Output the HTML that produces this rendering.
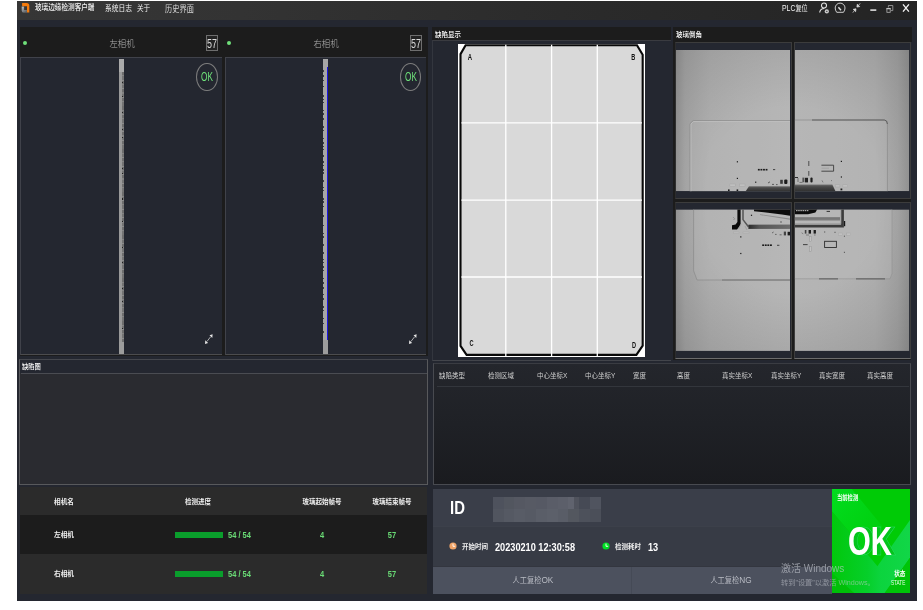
<!DOCTYPE html>
<html lang="zh"><head><meta charset="utf-8"><title>玻璃边缘检测客户端</title>
<style>
html,body{margin:0;padding:0;background:#fff;width:923px;height:610px;overflow:hidden}
body{position:relative;font-family:"Liberation Sans","Noto Sans CJK SC",sans-serif}
div,span,svg{position:absolute;display:block}
#root{left:0;top:0;width:923px;height:610px;will-change:transform}
.t{white-space:nowrap}
</style></head><body><div id="root">
<div style="left:17.2px;top:1.1px;width:899.6px;height:599.6px;background:#242730;"></div>
<div style="left:17.2px;top:1.1px;width:899.6px;height:18.7px;background:linear-gradient(90deg,#363636 0%,#333 25%,#2a2a2a 65%,#242424 100%);"></div>
<svg style="left:21px;top:2px" width="9" height="12" viewBox="21 2 9 12"><defs><linearGradient id="lg" x1="0" y1="0" x2="0.6" y2="1"><stop offset="0" stop-color="#c4c8cc"/><stop offset="1" stop-color="#5e6266"/></linearGradient></defs><path d="M21.7 6.4 H24.1 V9.9 H27 V12.7 H24 Q21.7 12.7 21.7 10.4 Z" fill="url(#lg)"/><path d="M22.1 2.9 H26.6 Q29.3 2.9 29.3 5.6 V12.6 H27 V6.2 H22.1 Z" fill="#f47a0c"/></svg>
<span class="t" style="left:34.9px;top:2.88px;font-size:7.6px;line-height:10.64px;color:#f2f2f2;font-weight:500;transform:scaleX(0.87);transform-origin:0 50%;">玻璃边缘检测客户端</span>
<span class="t" style="left:105.4px;top:3.68px;font-size:7.6px;line-height:10.64px;color:#f2f2f2;font-weight:400;transform:scaleX(0.89);transform-origin:0 50%;">系统日志</span>
<span class="t" style="left:136.9px;top:3.68px;font-size:7.6px;line-height:10.64px;color:#f2f2f2;font-weight:400;transform:scaleX(0.87);transform-origin:0 50%;">关于</span>
<span class="t" style="left:165.3px;top:2.54px;font-size:8.8px;line-height:12.32px;color:#d6d6d6;font-weight:400;transform:scaleX(0.82);transform-origin:0 50%;">历史界面</span>
<span class="t" style="left:782px;top:3.18px;font-size:7.6px;line-height:10.64px;color:#f2f2f2;font-weight:400;transform:scaleX(0.8);transform-origin:0 50%;"><span style="position:static;display:inline;font-size:8.6px">PLC</span>复位</span>
<svg style="left:816px;top:1px" width="100" height="18" viewBox="816 1 100 18" fill="none" stroke="#e2e2e2" stroke-width="1">
<circle cx="824" cy="5.4" r="2.5" stroke-width="1.05"/><path d="M819.7 12.5 Q820 8.7 824.3 8.5" stroke-width="1.15"/><circle cx="826.8" cy="11.4" r="2.15" fill="#c8c8c8" stroke="none"/><circle cx="826.8" cy="11.4" r="0.7" fill="#444" stroke="none"/>
<path d="M836.7 12.3 H843.5 Q845 10.2 845 8 A4.9 4.9 0 0 0 835.2 8 Q835.2 10.2 836.7 12.3 Z" stroke-width="0.95" stroke="#d6d6d6"/><path d="M838.4 7.3 L841 10.3" stroke-width="1.4" stroke="#e0e0e0"/>
<g fill="#dcdcdc" stroke="#dcdcdc" stroke-width="0.7"><path d="M856.9 7.1 L857.3 4.2 L859.7 6.6 Z M858.6 5.3 L860.2 3.3"/><path d="M856 8.8 L855.6 11.7 L853.2 9.3 Z M854.3 10.6 L852.8 12.7"/></g>
<path d="M870.3 10.1 H876.3" stroke-width="1.6" stroke="#dedede"/>
<path d="M888.4 7.4 V5.5 H892.8 V10.6 H891" stroke-width="0.8" stroke="#a8a8a8"/><rect x="886.9" y="8.6" width="3.3" height="3.7" stroke-width="0.8" stroke="#b4b4b4"/><path d="M886.5 8.6 H890.6" stroke="#c4c4c4" stroke-width="1.3"/>
<path d="M903 4.3 L908.9 11.6 M908.9 4.3 L903 11.6" stroke-width="1.35" stroke="#f4f4f4"/>
</svg>
<div style="left:19.5px;top:27px;width:408.4px;height:329.4px;background:#1c1c1c;"></div>
<div style="left:22.9px;top:40.9px;width:4.2px;height:4.2px;border-radius:50%;background:#6fe07a"></div>
<span class="t" style="left:121.65px;top:36.58px;font-size:9.6px;line-height:13.44px;color:#b4b4b4;font-weight:300;transform:translateX(-50%) scaleX(0.87);">左相机</span>
<div style="left:205.6px;top:34.7px;width:12.3px;height:16.1px;box-sizing:border-box;border:1px solid #6e6e6e;background:#232323;overflow:hidden"></div>
<span class="t" style="left:211.8px;top:35.82px;font-size:12.4px;line-height:17.36px;color:#dcdcdc;font-weight:400;transform:translateX(-50%) scaleX(0.72);">57</span>
<div style="left:20.3px;top:57.1px;width:201.7px;height:298px;background:#242730;box-sizing:border-box;border:1px solid #40424a;border-right:none;border-width:1.1px 0 1.2px 1.2px;border-bottom-color:#4c4c4e"></div>
<div style="left:119.1px;top:58.9px;width:5px;height:294.9px;background:#8f8f8f;"></div>
<div style="left:119.1px;top:58.9px;width:5px;height:13.1px;background:#aaaaaa;"></div>
<div style="left:119.1px;top:72px;width:5px;height:270px;background:#999999;"></div>
<div style="left:122px;top:72px;width:1.5px;height:270px;background:repeating-linear-gradient(180deg,#6e6e6e 0 3.1px,#848484 3.1px 4.3px,#747474 4.3px 7.7px,#8c8c8c 7.7px 8.6px)"></div>
<div style="left:122.1px;top:81.5px;width:1.1px;height:1.2px;background:#1e1e1e"></div>
<div style="left:122.1px;top:96px;width:1.1px;height:1.2px;background:#1e1e1e"></div>
<div style="left:122.1px;top:112.3px;width:1.1px;height:1.2px;background:#1e1e1e"></div>
<div style="left:122.1px;top:128.5px;width:1.1px;height:1.2px;background:#1e1e1e"></div>
<div style="left:122.1px;top:137px;width:1.1px;height:1.2px;background:#1e1e1e"></div>
<div style="left:122.1px;top:167.5px;width:1.1px;height:1.2px;background:#1e1e1e"></div>
<div style="left:122.1px;top:173px;width:1.1px;height:1.2px;background:#1e1e1e"></div>
<div style="left:122.1px;top:198.4px;width:1.1px;height:1.2px;background:#1e1e1e"></div>
<div style="left:122.1px;top:221px;width:1.1px;height:1.2px;background:#1e1e1e"></div>
<div style="left:122.1px;top:246.7px;width:1.1px;height:1.2px;background:#1e1e1e"></div>
<div style="left:122.1px;top:262px;width:1.1px;height:1.2px;background:#1e1e1e"></div>
<div style="left:122.1px;top:288.3px;width:1.1px;height:1.2px;background:#1e1e1e"></div>
<div style="left:122.1px;top:301px;width:1.1px;height:1.2px;background:#1e1e1e"></div>
<div style="left:122.1px;top:327.5px;width:1.1px;height:1.2px;background:#1e1e1e"></div>
<div style="left:119.1px;top:342px;width:5px;height:11.8px;background:#9c9c9c;"></div>
<div style="left:196.4px;top:63px;width:21.4px;height:28px;box-sizing:border-box;border:0.8px solid #7c7c7c;border-radius:50%"></div>
<span class="t" style="left:207.1px;top:68.92px;font-size:12.4px;line-height:17.36px;color:#6fe27a;font-weight:400;transform:translateX(-50%) scaleX(0.66);">OK</span>
<svg style="left:203.8px;top:333px" width="10" height="12" viewBox="0 0 10 12" fill="#e4e4e4" stroke="#d0d0d0" stroke-width="0.8"><path d="M3 8.4 L6.6 3.8" fill="none"/><path d="M8.6 1.3 L8.3 4.9 L5.5 2.2 Z M1 10.9 L1.3 7.3 L4.1 10 Z" stroke="none"/></svg>
<div style="left:226.9px;top:40.9px;width:4.2px;height:4.2px;border-radius:50%;background:#6fe07a"></div>
<span class="t" style="left:326px;top:36.58px;font-size:9.6px;line-height:13.44px;color:#b4b4b4;font-weight:300;transform:translateX(-50%) scaleX(0.87);">右相机</span>
<div style="left:409.7px;top:34.7px;width:12.3px;height:16.1px;box-sizing:border-box;border:1px solid #6e6e6e;background:#232323;overflow:hidden"></div>
<span class="t" style="left:415.9px;top:35.82px;font-size:12.4px;line-height:17.36px;color:#dcdcdc;font-weight:400;transform:translateX(-50%) scaleX(0.72);">57</span>
<div style="left:224.9px;top:57.1px;width:201.2px;height:298px;background:#242730;box-sizing:border-box;border:1px solid #40424a;border-right:none;border-width:1.1px 0 1.2px 1.2px;border-bottom-color:#4c4c4e"></div>
<div style="left:323.1px;top:58.9px;width:5px;height:294.9px;background:#8f8f8f;"></div>
<div style="left:323.1px;top:58.9px;width:5px;height:13.1px;background:#aaaaaa;"></div>
<div style="left:323.1px;top:58.9px;width:5px;height:280.9px;background:#a6a6a6;"></div>
<div style="left:323.1px;top:339.8px;width:5px;height:14px;background:#9c9c9c;"></div>
<div style="left:326.5px;top:66.9px;width:0.4px;height:272.9px;background:#8c8a60;"></div>
<div style="left:322.9px;top:70px;width:1.5px;height:1.6px;background:rgba(30,30,34,0.75)"></div>
<div style="left:322.9px;top:75.1px;width:1.5px;height:1.6px;background:rgba(30,30,34,0.75)"></div>
<div style="left:322.9px;top:79.6px;width:1.5px;height:1.6px;background:rgba(30,30,34,0.75)"></div>
<div style="left:322.9px;top:85.9px;width:1.5px;height:1.6px;background:rgba(30,30,34,0.75)"></div>
<div style="left:322.9px;top:95.3px;width:1.5px;height:1.6px;background:rgba(30,30,34,0.75)"></div>
<div style="left:322.9px;top:98.5px;width:1.5px;height:1.6px;background:rgba(30,30,34,0.75)"></div>
<div style="left:322.9px;top:101.7px;width:1.5px;height:1.6px;background:rgba(30,30,34,0.75)"></div>
<div style="left:322.9px;top:109.9px;width:1.5px;height:1.6px;background:rgba(30,30,34,0.75)"></div>
<div style="left:322.9px;top:113.1px;width:1.5px;height:1.6px;background:rgba(30,30,34,0.75)"></div>
<div style="left:322.9px;top:118.2px;width:1.5px;height:1.6px;background:rgba(30,30,34,0.75)"></div>
<div style="left:322.9px;top:126.4px;width:1.5px;height:1.6px;background:rgba(30,30,34,0.75)"></div>
<div style="left:322.9px;top:129.6px;width:1.5px;height:1.6px;background:rgba(30,30,34,0.75)"></div>
<div style="left:322.9px;top:137.8px;width:1.5px;height:1.6px;background:rgba(30,30,34,0.75)"></div>
<div style="left:322.9px;top:142.3px;width:1.5px;height:1.6px;background:rgba(30,30,34,0.75)"></div>
<div style="left:322.9px;top:145.5px;width:1.5px;height:1.6px;background:rgba(30,30,34,0.75)"></div>
<div style="left:322.9px;top:148.7px;width:1.5px;height:1.6px;background:rgba(30,30,34,0.75)"></div>
<div style="left:322.9px;top:155.0px;width:1.5px;height:1.6px;background:rgba(30,30,34,0.75)"></div>
<div style="left:322.9px;top:161.3px;width:1.5px;height:1.6px;background:rgba(30,30,34,0.75)"></div>
<div style="left:322.9px;top:164.5px;width:1.5px;height:1.6px;background:rgba(30,30,34,0.75)"></div>
<div style="left:322.9px;top:169.0px;width:1.5px;height:1.6px;background:rgba(30,30,34,0.75)"></div>
<div style="left:322.9px;top:172.2px;width:1.5px;height:1.6px;background:rgba(30,30,34,0.75)"></div>
<div style="left:322.9px;top:180.4px;width:1.5px;height:1.6px;background:rgba(30,30,34,0.75)"></div>
<div style="left:322.9px;top:186.7px;width:1.5px;height:1.6px;background:rgba(30,30,34,0.75)"></div>
<div style="left:322.9px;top:189.9px;width:1.5px;height:1.6px;background:rgba(30,30,34,0.75)"></div>
<div style="left:322.9px;top:198.1px;width:1.5px;height:1.6px;background:rgba(30,30,34,0.75)"></div>
<div style="left:322.9px;top:201.3px;width:1.5px;height:1.6px;background:rgba(30,30,34,0.75)"></div>
<div style="left:322.9px;top:205.8px;width:1.5px;height:1.6px;background:rgba(30,30,34,0.75)"></div>
<div style="left:322.9px;top:215.2px;width:1.5px;height:1.6px;background:rgba(30,30,34,0.75)"></div>
<div style="left:322.9px;top:224.6px;width:1.5px;height:1.6px;background:rgba(30,30,34,0.75)"></div>
<div style="left:322.9px;top:232.8px;width:1.5px;height:1.6px;background:rgba(30,30,34,0.75)"></div>
<div style="left:322.9px;top:236.0px;width:1.5px;height:1.6px;background:rgba(30,30,34,0.75)"></div>
<div style="left:322.9px;top:244.2px;width:1.5px;height:1.6px;background:rgba(30,30,34,0.75)"></div>
<div style="left:322.9px;top:252.4px;width:1.5px;height:1.6px;background:rgba(30,30,34,0.75)"></div>
<div style="left:322.9px;top:258.7px;width:1.5px;height:1.6px;background:rgba(30,30,34,0.75)"></div>
<div style="left:322.9px;top:261.9px;width:1.5px;height:1.6px;background:rgba(30,30,34,0.75)"></div>
<div style="left:322.9px;top:266.4px;width:1.5px;height:1.6px;background:rgba(30,30,34,0.75)"></div>
<div style="left:322.9px;top:269.6px;width:1.5px;height:1.6px;background:rgba(30,30,34,0.75)"></div>
<div style="left:322.9px;top:277.8px;width:1.5px;height:1.6px;background:rgba(30,30,34,0.75)"></div>
<div style="left:322.9px;top:282.3px;width:1.5px;height:1.6px;background:rgba(30,30,34,0.75)"></div>
<div style="left:322.9px;top:287.4px;width:1.5px;height:1.6px;background:rgba(30,30,34,0.75)"></div>
<div style="left:322.9px;top:293.7px;width:1.5px;height:1.6px;background:rgba(30,30,34,0.75)"></div>
<div style="left:322.9px;top:298.2px;width:1.5px;height:1.6px;background:rgba(30,30,34,0.75)"></div>
<div style="left:322.9px;top:306.4px;width:1.5px;height:1.6px;background:rgba(30,30,34,0.75)"></div>
<div style="left:322.9px;top:309.6px;width:1.5px;height:1.6px;background:rgba(30,30,34,0.75)"></div>
<div style="left:322.9px;top:317.8px;width:1.5px;height:1.6px;background:rgba(30,30,34,0.75)"></div>
<div style="left:322.9px;top:322.9px;width:1.5px;height:1.6px;background:rgba(30,30,34,0.75)"></div>
<div style="left:322.9px;top:331.1px;width:1.5px;height:1.6px;background:rgba(30,30,34,0.75)"></div>
<div style="left:326.9px;top:66.9px;width:1.3px;height:272.9px;background:#1a14e0;"></div>
<div style="left:399.9px;top:63px;width:21.4px;height:28px;box-sizing:border-box;border:0.8px solid #7c7c7c;border-radius:50%"></div>
<span class="t" style="left:410.6px;top:68.92px;font-size:12.4px;line-height:17.36px;color:#6fe27a;font-weight:400;transform:translateX(-50%) scaleX(0.66);">OK</span>
<svg style="left:407.9px;top:333px" width="10" height="12" viewBox="0 0 10 12" fill="#e4e4e4" stroke="#d0d0d0" stroke-width="0.8"><path d="M3 8.4 L6.6 3.8" fill="none"/><path d="M8.6 1.3 L8.3 4.9 L5.5 2.2 Z M1 10.9 L1.3 7.3 L4.1 10 Z" stroke="none"/></svg>
<div style="left:19.2px;top:359.2px;width:408.7px;height:126.1px;background:#242730;box-sizing:border-box;border:1px solid #58595c;border-top:1.5px solid #45474d"></div>
<div style="left:20.2px;top:373.2px;width:406.7px;height:111.1px;background:#2a2b30;"></div>
<div style="left:20.5px;top:372.5px;width:406.4px;height:0.8px;background:#4a4c52;"></div>
<span class="t" style="left:21.9px;top:362.09px;font-size:7.3px;line-height:10.22px;color:#ffffff;font-weight:500;transform:scaleX(0.86);transform-origin:0 50%;">缺陷图</span>
<div style="left:19.5px;top:486.7px;width:407.8px;height:28.3px;background:#2b2b2b;"></div>
<div style="left:19.5px;top:515px;width:407.8px;height:39px;background:#1c1c1c;"></div>
<div style="left:19.5px;top:554px;width:407.8px;height:39.8px;background:#2b2b2b;"></div>
<span class="t" style="left:53.8px;top:496.62px;font-size:7.4px;line-height:10.36px;color:#f0f0f0;font-weight:700;transform:scaleX(0.9);transform-origin:0 50%;">相机名</span>
<span class="t" style="left:197.6px;top:496.62px;font-size:7.4px;line-height:10.36px;color:#f0f0f0;font-weight:700;transform:translateX(-50%) scaleX(0.88);">检测进度</span>
<span class="t" style="left:321.5px;top:496.62px;font-size:7.4px;line-height:10.36px;color:#f0f0f0;font-weight:700;transform:translateX(-50%) scaleX(0.88);">玻璃起始帧号</span>
<span class="t" style="left:392px;top:496.62px;font-size:7.4px;line-height:10.36px;color:#f0f0f0;font-weight:700;transform:translateX(-50%) scaleX(0.88);">玻璃结束帧号</span>
<span class="t" style="left:53.8px;top:530.42px;font-size:7.4px;line-height:10.36px;color:#f0f0f0;font-weight:700;transform:scaleX(0.9);transform-origin:0 50%;">左相机</span>
<div style="left:175.3px;top:532.2px;width:47.7px;height:5.8px;background:#0a9e2c;"></div>
<span class="t" style="left:227.6px;top:529.28px;font-size:8.6px;line-height:12.04px;color:#6adc76;font-weight:700;transform:scaleX(0.87);transform-origin:0 50%;">54 / 54</span>
<span class="t" style="left:321.5px;top:529.28px;font-size:8.6px;line-height:12.04px;color:#6adc76;font-weight:700;transform:translateX(-50%) scaleX(0.87);">4</span>
<span class="t" style="left:392px;top:529.28px;font-size:8.6px;line-height:12.04px;color:#6adc76;font-weight:700;transform:translateX(-50%) scaleX(0.87);">57</span>
<span class="t" style="left:53.8px;top:569.02px;font-size:7.4px;line-height:10.36px;color:#f0f0f0;font-weight:700;transform:scaleX(0.9);transform-origin:0 50%;">右相机</span>
<div style="left:175.3px;top:570.8px;width:47.7px;height:5.8px;background:#0a9e2c;"></div>
<span class="t" style="left:227.6px;top:567.88px;font-size:8.6px;line-height:12.04px;color:#6adc76;font-weight:700;transform:scaleX(0.87);transform-origin:0 50%;">54 / 54</span>
<span class="t" style="left:321.5px;top:567.88px;font-size:8.6px;line-height:12.04px;color:#6adc76;font-weight:700;transform:translateX(-50%) scaleX(0.87);">4</span>
<span class="t" style="left:392px;top:567.88px;font-size:8.6px;line-height:12.04px;color:#6adc76;font-weight:700;transform:translateX(-50%) scaleX(0.87);">57</span>
<div style="left:432.2px;top:27px;width:238.6px;height:13.2px;background:#1c1c1c;"></div>
<span class="t" style="left:434.6px;top:29.89px;font-size:7.3px;line-height:10.22px;color:#ffffff;font-weight:500;transform:scaleX(0.89);transform-origin:0 50%;">缺陷显示</span>
<div style="left:432.2px;top:40.2px;width:239.2px;height:320.7px;background:#242730;box-sizing:border-box;border:1px solid #33363e;border-right:none;border-top-color:#3a3b40;border-bottom:1.7px solid #43454b"></div>
<div style="left:458px;top:43.7px;width:187.2px;height:312.9px;background:#ffffff;"></div>
<svg style="left:458px;top:43.7px" width="187.2" height="312.9" viewBox="458 43.7 187.2 312.9">
<path d="M465.6 44.9 H637 L642.7 54.4 V345.4 L636.4 354.6 H466.6 L460.5 345.6 V53.8 Z" fill="#d9d9d9" stroke="#080808" stroke-width="2.1" stroke-linejoin="miter"/>
<g stroke="#ffffff" stroke-width="1.3"><path d="M505.8 44.4 V355.6 M551.6 44.4 V355.6 M597.3 44.4 V355.6"/><path d="M461.4 122.5 H642 M461.4 199.8 H642 M461.4 276.7 H642"/></g>
<g font-family="Liberation Sans, sans-serif" font-weight="700" font-size="8.5" fill="#111" text-anchor="middle"><text x="0" y="59.9" transform="translate(470 0) scale(.7 1)">A</text><text x="0" y="59.7" transform="translate(633.3 0) scale(.66 1)">B</text><text x="0" y="345.7" transform="translate(471.4 0) scale(.66 1)">C</text><text x="0" y="347.7" transform="translate(634 0) scale(.66 1)">D</text></g>
</svg>
<div style="left:673px;top:27px;width:238.9px;height:15.2px;background:#1c1c1c;"></div>
<span class="t" style="left:675.6px;top:30.09px;font-size:7.3px;line-height:10.22px;color:#ffffff;font-weight:500;transform:scaleX(0.89);transform-origin:0 50%;">玻璃倒角</span>
<div style="left:673.1px;top:42px;width:238px;height:317.8px;background:#1c1c1c;"></div>
<div style="left:674.7px;top:42.2px;width:117px;height:156.8px;background:#242730;box-sizing:border-box;border:1px solid #3c3c3c;border-left-color:#2c2c2c"></div>
<div style="left:793.9px;top:42.2px;width:117.1px;height:156.8px;background:#242730;box-sizing:border-box;border:1px solid #3c3c3c;"></div>
<div style="left:674.7px;top:202px;width:117px;height:157px;background:#242730;box-sizing:border-box;border:1px solid #3c3c3c;border-bottom:1.2px solid #6c6c6c;border-left-color:#2c2c2c"></div>
<div style="left:793.9px;top:202px;width:117.1px;height:157px;background:#242730;box-sizing:border-box;border:1px solid #3c3c3c;border-bottom:1.2px solid #6c6c6c"></div>
<svg style="left:674px;top:42px" width="238" height="317" viewBox="674 42 238 317">
<defs>
<linearGradient id="gl" x1="0" x2="1" y1="0" y2="0"><stop offset="0" stop-color="#989898"/><stop offset="0.08" stop-color="#a8a8a8"/><stop offset="0.3" stop-color="#b1b1b1"/><stop offset="1" stop-color="#b6b6b6"/></linearGradient>
<linearGradient id="gr" x1="0" x2="1" y1="0" y2="0"><stop offset="0" stop-color="#b5b5b5"/><stop offset="0.7" stop-color="#b1b1b1"/><stop offset="0.9" stop-color="#a6a6a6"/><stop offset="1" stop-color="#979797"/></linearGradient>
<linearGradient id="band" x1="0" x2="0" y1="0" y2="1"><stop offset="0" stop-color="#6c6c6c"/><stop offset="0.3" stop-color="#4a4a4a"/><stop offset="1" stop-color="#2e2e2e"/></linearGradient>
<linearGradient id="band2" x1="0" x2="1" y1="0" y2="0"><stop offset="0" stop-color="#2a2a2a"/><stop offset="0.25" stop-color="#555"/><stop offset="1" stop-color="#6e6e6e"/></linearGradient>
<radialGradient id="vTL" gradientUnits="userSpaceOnUse" cx="790" cy="191" r="185"><stop offset="0.45" stop-color="#000" stop-opacity="0"/><stop offset="1" stop-color="#000" stop-opacity="0.13"/></radialGradient>
<radialGradient id="vTR" gradientUnits="userSpaceOnUse" cx="795" cy="191" r="185"><stop offset="0.45" stop-color="#000" stop-opacity="0"/><stop offset="1" stop-color="#000" stop-opacity="0.13"/></radialGradient>
<radialGradient id="vBL" gradientUnits="userSpaceOnUse" cx="790" cy="209" r="185"><stop offset="0.45" stop-color="#000" stop-opacity="0"/><stop offset="1" stop-color="#000" stop-opacity="0.13"/></radialGradient>
<radialGradient id="vBR" gradientUnits="userSpaceOnUse" cx="795" cy="209" r="185"><stop offset="0.45" stop-color="#000" stop-opacity="0"/><stop offset="1" stop-color="#000" stop-opacity="0.13"/></radialGradient>
<clipPath id="cTL"><rect x="675.8" y="50" width="114.2" height="141.2"/></clipPath>
<clipPath id="cTR"><rect x="794.9" y="50" width="114.4" height="141.2"/></clipPath>
<clipPath id="cBL"><rect x="675.8" y="209.4" width="114.2" height="141.5"/></clipPath>
<clipPath id="cBR"><rect x="794.9" y="209.4" width="114.4" height="141.5"/></clipPath>
</defs>
<g clip-path="url(#cTL)">
<rect x="675.8" y="50" width="114.2" height="141.2" fill="url(#gl)"/><rect x="675.8" y="50" width="114.2" height="141.2" fill="url(#vTL)"/>
<path d="M690 192 V123.6 L693.2 120.6 H791 V192 Z" fill="#b9b9b9" fill-opacity="0.3" stroke="#868686" stroke-width="0.7"/>
<path d="M691 192 V124 L693.6 121.5 H791" fill="none" stroke="#c6c6c6" stroke-width="0.6"/>
<rect x="736.8" y="161.2" width="1.2" height="1.2" fill="#1a1a1a"/>
<rect x="736.8" y="177.8" width="1.2" height="1.2" fill="#1a1a1a"/>
<rect x="755.1" y="181.6" width="1.2" height="1.2" fill="#1a1a1a"/>
<rect x="757.90" y="168.90" width="1.85" height="1.6" fill="#1a1a1a"/>
<rect x="760.48" y="168.90" width="1.85" height="1.6" fill="#1a1a1a"/>
<rect x="763.05" y="168.90" width="1.85" height="1.6" fill="#1a1a1a"/>
<rect x="765.62" y="168.90" width="1.85" height="1.6" fill="#1a1a1a"/>
<rect x="773" y="169.2" width="2.2" height="0.9" fill="#333"/>
<rect x="729.9" y="184" width="5.3" height="2.4" fill="#bfbfbf" stroke="#a4a4a4" stroke-width="0.4"/>
<rect x="739.7" y="184" width="5.3" height="2.4" fill="#bfbfbf" stroke="#a4a4a4" stroke-width="0.4"/>
<rect x="780.2" y="179.8" width="2.6" height="4" fill="#3a3a3a"/><rect x="784.2" y="179.6" width="3.2" height="4.4" rx="1" fill="#1c1c1c"/>
<path d="M768 183 l2 -1.2 M772 184.4 h2 M776 184.6 h1.6" stroke="#333" stroke-width="0.7"/>
<path d="M745.5 191.6 L749 186.2 H791 V191.6 Z" fill="url(#band)"/>
<rect x="728.0" y="189.4" width="1.6" height="1.6" fill="#1a1a1a"/>
<rect x="736.6" y="189.4" width="1.6" height="1.6" fill="#1a1a1a"/>
</g>
<g clip-path="url(#cTR)">
<rect x="794.9" y="50" width="114.4" height="141.2" fill="url(#gr)"/><rect x="794.9" y="50" width="114.4" height="141.2" fill="url(#vTR)"/>
<path d="M794 120 H884 Q887.4 120.2 887.4 124 V192 H794 Z" fill="#bababa" fill-opacity="0.3" stroke="#8a8a8a" stroke-width="0.7"/>
<path d="M812 120 H884.4 Q887.4 120.3 887.4 124" fill="none" stroke="#4e4e4e" stroke-width="0.8"/>
<path d="M808.8 161 V166 M808.8 171 V175.8" stroke="#333" stroke-width="0.8"/>
<path d="M821.4 165.2 H833.6 V171.2 H821.4" fill="none" stroke="#3c3c3c" stroke-width="0.9"/>
<path d="M821.6 168.2 H829" stroke="#8e8e8e" stroke-width="0.5"/>
<rect x="840.8" y="160.8" width="1.2" height="1.2" fill="#1a1a1a"/>
<rect x="840.8" y="176.4" width="1.2" height="1.2" fill="#1a1a1a"/>
<rect x="795" y="177" width="3" height="1" fill="#2a2a2a"/><path d="M798 178 v4 M799.5 182.4 h3" stroke="#444" stroke-width="0.6"/>
<rect x="802.4" y="177.6" width="2" height="4.6" fill="#555"/><rect x="805" y="177.8" width="3" height="4.6" fill="#222"/><rect x="810.4" y="177.6" width="2.2" height="5" rx="1" fill="#1c1c1c"/>
<path d="M822 180.4 l1 2 M831 180.6 h1" stroke="#555" stroke-width="0.6"/>
<path d="M794 184.6 H832.3 L835.6 191.6 H794 Z" fill="url(#band)"/>
<path d="M794 184.4 H832" stroke="#9a9a9a" stroke-width="0.5"/>
<rect x="835.3" y="184.8" width="4.6" height="2.2" fill="#bfbfbf" stroke="#a4a4a4" stroke-width="0.4"/>
<rect x="842.9" y="184.8" width="4.6" height="2.2" fill="#bfbfbf" stroke="#a4a4a4" stroke-width="0.4"/>
<rect x="840.5" y="188.5" width="1.8" height="1.8" fill="#1a1a1a"/>
</g>
<g clip-path="url(#cBL)">
<rect x="675.8" y="209.4" width="114.2" height="141.5" fill="url(#gl)"/><rect x="675.8" y="209.4" width="114.2" height="141.5" fill="url(#vBL)"/>
<path d="M693.6 208 V270.8 L697 280 H791 V208 Z" fill="#bababa" fill-opacity="0.3" stroke="#8a8a8a" stroke-width="0.7"/>
<path d="M722 280 H791" stroke="#6a6a6a" stroke-width="0.8"/>
<path d="M754 209 H791 V215.8 L782 214.6 L768 212.8 L754 211.2 Z" fill="#0c0c0c"/>
<path d="M760 214.2 L791 218.6 V220 L760 215 Z" fill="#8c8c8c"/>
<path d="M737.4 209 H740.6 V224 L739.6 226 L737 229.4 H732 V225.2 L735.6 224.6 L737.4 222 Z" fill="#0a0a0a"/>
<path d="M733 217 l1.6 1.6 l-1 1.4" stroke="#888" stroke-width="0.8" fill="none"/>
<path d="M743 209 V219.6 L748.4 226.8" fill="none" stroke="#555" stroke-width="1.5"/>
<path d="M741 224 l-2.4 5 M745 226 l2 4" stroke="#999" stroke-width="0.7"/>
<rect x="748.4" y="224.7" width="43" height="4.2" fill="url(#band2)"/>
<path d="M749 224.5 H791" stroke="#8a8a8a" stroke-width="0.5"/>
<rect x="750.9" y="214.7" width="1.2" height="1.2" fill="#1a1a1a"/>
<rect x="740.2" y="236.3" width="1.2" height="1.2" fill="#1a1a1a"/>
<rect x="740.2" y="252.9" width="1.2" height="1.2" fill="#1a1a1a"/>
<rect x="780" y="221" width="2" height="2" fill="#8c8c8c"/>
<rect x="733.3" y="232" width="5.7" height="1.6" fill="#bfbfbf" stroke="#a4a4a4" stroke-width="0.4"/>
<rect x="743" y="232" width="6.0" height="1.6" fill="#bfbfbf" stroke="#a4a4a4" stroke-width="0.4"/>
<rect x="783.8" y="231.6" width="2.2" height="3.8" fill="#444"/><rect x="787.6" y="231.8" width="2.4" height="3.6" fill="#1a1a1a"/>
<path d="M772 233 l1.6 -1 M775 234.4 h1.6 M779.6 234.8 h2" stroke="#444" stroke-width="0.7"/>
<rect x="762.20" y="244.40" width="1.87" height="1.6" fill="#1a1a1a"/>
<rect x="764.80" y="244.40" width="1.87" height="1.6" fill="#1a1a1a"/>
<rect x="767.40" y="244.40" width="1.87" height="1.6" fill="#1a1a1a"/>
<rect x="770.00" y="244.40" width="1.87" height="1.6" fill="#1a1a1a"/>
<rect x="777" y="244.8" width="2.4" height="0.9" fill="#333"/>
</g>
<g clip-path="url(#cBR)">
<rect x="794.9" y="209.4" width="114.4" height="141.5" fill="url(#gr)"/><rect x="794.9" y="209.4" width="114.4" height="141.5" fill="url(#vBR)"/>
<path d="M794 208 H892 V273.6 L890 278.8 H794 Z" fill="#bcbcbc" fill-opacity="0.35" stroke="#909090" stroke-width="0.6"/>
<path d="M819 278.9 H838 M856 278.9 H885" stroke="#4e4e4e" stroke-width="0.9"/>
<path d="M794 209 H817.4 L815.4 212.4 L808 214.2 H794 Z" fill="#0c0c0c"/>
<rect x="796.00" y="210.25" width="1.56" height="0.9" fill="#dcdcdc"/>
<rect x="798.17" y="210.25" width="1.56" height="0.9" fill="#dcdcdc"/>
<rect x="800.33" y="210.25" width="1.56" height="0.9" fill="#dcdcdc"/>
<rect x="802.50" y="210.25" width="1.56" height="0.9" fill="#dcdcdc"/>
<rect x="804.67" y="210.25" width="1.56" height="0.9" fill="#dcdcdc"/>
<rect x="806.83" y="210.25" width="1.56" height="0.9" fill="#dcdcdc"/>
<rect x="826.6" y="210.9" width="3.4" height="0.9" fill="#222"/>
<path d="M794 217.8 H840 V220.4 H794 Z" fill="#7c7c7c"/><path d="M794 217.7 H840" stroke="#5a5a5a" stroke-width="0.6"/>
<path d="M842.5 209 V226.1 H794" fill="none" stroke="#3c3c3c" stroke-width="2.8"/>
<path d="M841 209 V223.8 H794" fill="none" stroke="#8a8a8a" stroke-width="0.6"/>
<rect x="844" y="221" width="1.2" height="5.2" fill="#161616"/>
<rect x="804.8" y="230" width="1.6" height="3.6" fill="#444"/><rect x="808.6" y="230" width="2.4" height="3.6" fill="#1c1c1c"/><rect x="813.6" y="230" width="2.3" height="3.6" fill="#1c1c1c"/>
<path d="M801.6 232.8 l1.6 1 M806 235 h3 M814 235 h1.6" stroke="#555" stroke-width="0.6"/>
<rect x="809.5" y="236.5" width="2.0" height="5.2" fill="#c2c2c2" stroke="#8e8e8e" stroke-width="0.4"/>
<rect x="809.5" y="246.3" width="2.0" height="5.0" fill="#c2c2c2" stroke="#8e8e8e" stroke-width="0.4"/>
<rect x="824.6" y="241.3" width="11.8" height="6.2" fill="none" stroke="#2c2c2c" stroke-width="0.9"/>
<rect x="838.3" y="233" width="4.3" height="2.3" fill="#bfbfbf" stroke="#a4a4a4" stroke-width="0.4"/>
<rect x="846.7" y="233" width="4.1" height="2.3" fill="#bfbfbf" stroke="#a4a4a4" stroke-width="0.4"/>
<rect x="803" y="244.2" width="4.6" height="0.9" fill="#333"/>
<rect x="834.5" y="231.8" width="1.0" height="1.0" fill="#444"/>
<rect x="843.9" y="235.7" width="1.0" height="1.0" fill="#444"/>
<rect x="843.9" y="251.8" width="1.0" height="1.0" fill="#444"/>
<rect x="824.2" y="231.5" width="1.0" height="1.0" fill="#444"/>
</g>
</svg>
<div style="left:433.2px;top:362.8px;width:477.6px;height:122.2px;box-sizing:border-box;border:1px solid #484a50;border-top-color:#3a3c42;background:linear-gradient(180deg,#24262c 0%,#1f2126 50%,#1a1b1f 100%)"></div>
<div style="left:436.9px;top:385.5px;width:471.7px;height:0.7px;background:#33363c;"></div>
<span class="t" style="left:439.2px;top:370.66px;font-size:7.2px;line-height:10.08px;color:#cfcfcf;font-weight:400;transform:scaleX(0.9);transform-origin:0 50%;">缺陷类型</span>
<span class="t" style="left:487.6px;top:370.66px;font-size:7.2px;line-height:10.08px;color:#cfcfcf;font-weight:400;transform:scaleX(0.9);transform-origin:0 50%;">检测区域</span>
<span class="t" style="left:537px;top:370.66px;font-size:7.2px;line-height:10.08px;color:#cfcfcf;font-weight:400;transform:scaleX(0.9);transform-origin:0 50%;">中心坐标X</span>
<span class="t" style="left:584.8px;top:370.66px;font-size:7.2px;line-height:10.08px;color:#cfcfcf;font-weight:400;transform:scaleX(0.9);transform-origin:0 50%;">中心坐标Y</span>
<span class="t" style="left:633.2px;top:370.66px;font-size:7.2px;line-height:10.08px;color:#cfcfcf;font-weight:400;transform:scaleX(0.9);transform-origin:0 50%;">宽度</span>
<span class="t" style="left:677.4px;top:370.66px;font-size:7.2px;line-height:10.08px;color:#cfcfcf;font-weight:400;transform:scaleX(0.9);transform-origin:0 50%;">高度</span>
<span class="t" style="left:722px;top:370.66px;font-size:7.2px;line-height:10.08px;color:#cfcfcf;font-weight:400;transform:scaleX(0.9);transform-origin:0 50%;">真实坐标X</span>
<span class="t" style="left:770.5px;top:370.66px;font-size:7.2px;line-height:10.08px;color:#cfcfcf;font-weight:400;transform:scaleX(0.9);transform-origin:0 50%;">真实坐标Y</span>
<span class="t" style="left:818.7px;top:370.66px;font-size:7.2px;line-height:10.08px;color:#cfcfcf;font-weight:400;transform:scaleX(0.9);transform-origin:0 50%;">真实宽度</span>
<span class="t" style="left:867.4px;top:370.66px;font-size:7.2px;line-height:10.08px;color:#cfcfcf;font-weight:400;transform:scaleX(0.9);transform-origin:0 50%;">真实高度</span>
<div style="left:433.1px;top:488.7px;width:398.6px;height:77.9px;background:#3a3e49;"></div>
<div style="left:433.1px;top:526.8px;width:398.6px;height:39.8px;background:#373b45;"></div>
<div style="left:433.1px;top:526.3px;width:398.6px;height:0.7px;background:#3c404a;"></div>
<span class="t" style="left:450.2px;top:495.38px;font-size:18.6px;line-height:26.04px;color:#ffffff;font-weight:700;transform:scaleX(0.8);transform-origin:0 50%;">ID</span>
<div style="left:492.8px;top:496.8px;width:11.01px;height:12.7px;background:#4e525d;"></div>
<div style="left:492.8px;top:509.4px;width:11.01px;height:12.6px;background:#51555f;"></div>
<div style="left:503.61px;top:496.8px;width:11.01px;height:12.7px;background:#52565f;"></div>
<div style="left:503.61px;top:509.4px;width:11.01px;height:12.6px;background:#555963;"></div>
<div style="left:514.42px;top:496.8px;width:11.01px;height:12.7px;background:#555862;"></div>
<div style="left:514.42px;top:509.4px;width:11.01px;height:12.6px;background:#585c66;"></div>
<div style="left:525.23px;top:496.8px;width:11.01px;height:12.7px;background:#575a64;"></div>
<div style="left:525.23px;top:509.4px;width:11.01px;height:12.6px;background:#565a64;"></div>
<div style="left:536.04px;top:496.8px;width:11.01px;height:12.7px;background:#565964;"></div>
<div style="left:536.04px;top:509.4px;width:11.01px;height:12.6px;background:#5a5e68;"></div>
<div style="left:546.85px;top:496.8px;width:11.01px;height:12.7px;background:#5a5d68;"></div>
<div style="left:546.85px;top:509.4px;width:11.01px;height:12.6px;background:#5c606a;"></div>
<div style="left:557.66px;top:496.8px;width:11.01px;height:12.7px;background:#5c5f6a;"></div>
<div style="left:557.66px;top:509.4px;width:11.01px;height:12.6px;background:#595d67;"></div>
<div style="left:568.47px;top:496.8px;width:11.01px;height:12.7px;background:#60636e;"></div>
<div style="left:568.47px;top:509.4px;width:11.01px;height:12.6px;background:#53575f;"></div>
<div style="left:579.28px;top:496.8px;width:11.01px;height:12.7px;background:#464a55;"></div>
<div style="left:579.28px;top:509.4px;width:11.01px;height:12.6px;background:#4d515b;"></div>
<div style="left:590.09px;top:496.8px;width:11.01px;height:12.7px;background:#50545f;"></div>
<div style="left:590.09px;top:509.4px;width:11.01px;height:12.6px;background:#4b4f59;"></div>
<div style="left:573.88px;top:496.8px;width:5.61px;height:12.7px;background:#50535d;"></div>
<svg style="left:449.3px;top:542.4px" width="8" height="8" viewBox="-4 -4 8 8"><circle r="3.6" fill="#f0a468"/><path d="M0 -2.4 V0.3 H2.2" fill="none" stroke="#fff" stroke-width="0.9"/></svg>
<span class="t" style="left:461.9px;top:541.92px;font-size:7.4px;line-height:10.36px;color:#f0f0f0;font-weight:700;transform:scaleX(0.88);transform-origin:0 50%;">开始时间</span>
<span class="t" style="left:494.8px;top:539.52px;font-size:11.4px;line-height:15.96px;color:#ffffff;font-weight:700;transform:scaleX(0.805);transform-origin:0 50%;">20230210 12:30:58</span>
<svg style="left:602px;top:542.4px" width="8" height="8" viewBox="-4 -4 8 8"><circle r="3.6" fill="#00e024"/><path d="M0 -2.4 V0.3 H2.2" fill="none" stroke="#fff" stroke-width="0.9"/></svg>
<span class="t" style="left:614.7px;top:541.92px;font-size:7.4px;line-height:10.36px;color:#f0f0f0;font-weight:700;transform:scaleX(0.88);transform-origin:0 50%;">检测耗时</span>
<span class="t" style="left:647.8px;top:539.52px;font-size:11.4px;line-height:15.96px;color:#ffffff;font-weight:700;transform:scaleX(0.805);transform-origin:0 50%;">13</span>
<div style="left:433.1px;top:566.9px;width:398.6px;height:26.7px;background:#4c515e;"></div>
<div style="left:630.8px;top:566.9px;width:0.7px;height:26.7px;background:#454a56;"></div>
<div style="left:433.1px;top:566.2px;width:398.6px;height:0.7px;background:#33363f;"></div>
<span class="t" style="left:532.6px;top:574.8px;font-size:8px;line-height:11.2px;color:#b9bcc4;font-weight:400;transform:translateX(-50%) scaleX(0.9);">人工复检<span style="position:static;display:inline;font-size:9.2px">OK</span></span>
<span class="t" style="left:731px;top:574.8px;font-size:8px;line-height:11.2px;color:#b9bcc4;font-weight:400;transform:translateX(-50%) scaleX(0.9);">人工复检<span style="position:static;display:inline;font-size:9.2px">NG</span></span>
<svg style="left:831.6px;top:488.8px" width="78.7" height="104.4" viewBox="831.6 488.8 78.7 104.4">
<defs><linearGradient id="gb" x1="0" y1="0" x2="1" y2="1"><stop offset="0" stop-color="#02dc1e"/><stop offset="1" stop-color="#00cc0a"/></linearGradient><linearGradient id="gc" gradientUnits="userSpaceOnUse" x1="831.6" y1="0" x2="910.3" y2="0"><stop offset="0" stop-color="#01c80c"/><stop offset="0.45" stop-color="#06cf2a"/><stop offset="0.62" stop-color="#0cd43e"/><stop offset="1" stop-color="#12d648"/></linearGradient></defs>
<rect x="831.6" y="488.8" width="78.7" height="104.4" fill="#00cb06"/>
<polygon points="831.6,488.8 851.4,488.8 882,526 866,552 831.6,511" fill="url(#gb)"/>
<polygon points="877,566 910.3,518.7 910.3,556.7 884,593.2 854,593.2 831.6,573 831.6,511" fill="url(#gc)"/>
<polygon points="831.6,573 854,593.2 831.6,593.2" fill="#00bf08"/>
<polygon points="884,593.2 910.3,556.7 910.3,593.2" fill="#00c408"/>
</svg>
<span class="t" style="left:836.5px;top:493.14px;font-size:6.8px;line-height:9.52px;color:#ffffff;font-weight:700;transform:scaleX(0.78);transform-origin:0 50%;">当前检测</span>
<span class="t" style="left:852.2px;top:512.52px;font-size:41.4px;line-height:57.96px;color:#04c41c;font-weight:700;transform:scaleX(0.705);transform-origin:0 50%;-webkit-text-stroke:0.5px #2adf6a;">OK</span>
<span class="t" style="left:847.6px;top:512.52px;font-size:41.4px;line-height:57.96px;color:#ffffff;font-weight:700;transform:scaleX(0.705);transform-origin:0 50%;">OK</span>
<span class="t" style="right:17.2px;top:568.66px;font-size:7.2px;line-height:10.08px;color:#ffffff;font-weight:700;transform:scaleX(0.78);transform-origin:100% 50%;">状态</span>
<span class="t" style="right:17.2px;top:578.08px;font-size:7.6px;line-height:10.64px;color:#eaffea;font-weight:400;transform:scaleX(0.62);transform-origin:100% 50%;">STATE</span>
<span class="t" style="left:781px;top:561.56px;font-size:10.2px;line-height:14.28px;color:rgba(200,204,212,0.62);font-weight:400;transform:scaleX(0.98);transform-origin:0 50%;">激活 Windows</span>
<span class="t" style="left:781px;top:578.36px;font-size:7.2px;line-height:10.08px;color:rgba(200,204,212,0.55);font-weight:400;transform:scaleX(1.0);transform-origin:0 50%;">转到"设置"以激活 Windows。</span>
</div></body></html>
